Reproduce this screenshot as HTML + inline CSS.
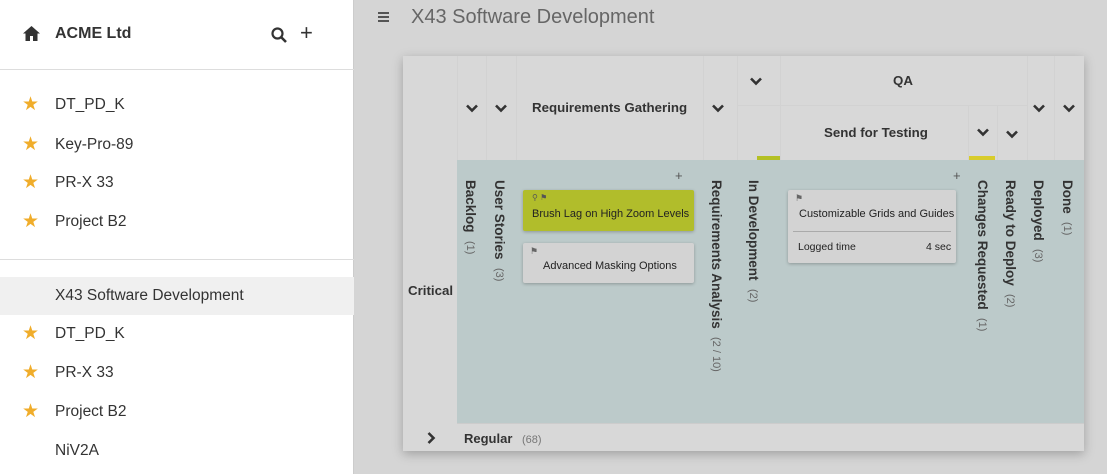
<!DOCTYPE html>
<html><head><style>
*{margin:0;padding:0;box-sizing:border-box}
body{width:1107px;height:474px;overflow:hidden;font-family:"Liberation Sans",sans-serif;background:#d5d5d5;position:relative;color:#333}
.a{position:absolute}
#side{left:0;top:0;width:354px;height:474px;background:#fff;border-right:1px solid #ccc}
.it{position:absolute;left:0;width:354px;height:38px;font-size:15.5px;color:#333;line-height:38px}
.it .t{position:absolute;left:55px}
.star{position:absolute;left:22px;top:0;color:#f0ad2b;font-size:19px}
.hd{font-weight:bold;font-size:13.3px;color:#333;white-space:nowrap}
.v{writing-mode:vertical-rl;font-weight:bold;font-size:13.5px;color:#333;white-space:nowrap}
.v span{font-weight:normal;font-size:11px;color:#666;margin-top:8px;display:inline-block}
.chev{position:absolute;width:12px;height:9px}
.card{position:absolute;border-radius:2px;box-shadow:0 1px 3px rgba(0,0,0,.25);font-size:11px;color:#222;white-space:nowrap}
</style></head><body>
<div class="a" id="side">
 <svg class="a" style="left:23px;top:26px" width="17" height="15" viewBox="0 0 17 15"><path d="M8.5 0L0 7.5h2.5V15h4.5v-5h3v5h4.5V7.5H17z" fill="#333"/></svg>
 <div class="a" style="left:55px;top:25px;font-weight:bold;font-size:16px;color:#333">ACME Ltd</div>
 <svg class="a" style="left:271px;top:27px" width="17" height="17" viewBox="0 0 17 17"><circle cx="6.5" cy="6.5" r="5" stroke="#333" stroke-width="2.2" fill="none"/><path d="M10 10l5 5" stroke="#333" stroke-width="2.6"/></svg>
 <div class="a" style="left:300px;top:20px;font-size:22px;color:#333">+</div>
 <div class="a" style="left:0;top:69px;width:354px;height:1px;background:#ddd"></div>
 <div class="it" style="top:86px"><span class="star">★</span><span class="t">DT_PD_K</span></div>
 <div class="it" style="top:126px"><span class="star">★</span><span class="t">Key-Pro-89</span></div>
 <div class="it" style="top:164px"><span class="star">★</span><span class="t">PR-X 33</span></div>
 <div class="it" style="top:203px"><span class="star">★</span><span class="t">Project B2</span></div>
 <div class="a" style="left:0;top:259px;width:354px;height:1px;background:#ddd"></div>
 <div class="it" style="top:277px;background:#f0f0f0"><span class="t">X43 Software Development</span></div>
 <div class="it" style="top:315px"><span class="star">★</span><span class="t">DT_PD_K</span></div>
 <div class="it" style="top:354px"><span class="star">★</span><span class="t">PR-X 33</span></div>
 <div class="it" style="top:393px"><span class="star">★</span><span class="t">Project B2</span></div>
 <div class="it" style="top:432px"><span class="t">NiV2A</span></div>
</div>
<div class="a" style="left:378px;top:12px;width:11px;height:2px;background:#555;box-shadow:0 4px 0 #555,0 8px 0 #555"></div>
<div class="a" style="left:411px;top:6px;font-size:20px;color:#666">X43 Software Development</div>

<div class="a" style="left:403px;top:56px;width:681px;height:395px;background:#d8d8d8;box-shadow:0 3px 10px rgba(0,0,0,.25)"></div>
<div class="a" style="left:457px;top:56px;width:1px;height:104px;background:#d2d2d2"></div>
<div class="a" style="left:486px;top:56px;width:1px;height:104px;background:#d2d2d2"></div>
<div class="a" style="left:516px;top:56px;width:1px;height:104px;background:#d2d2d2"></div>
<div class="a" style="left:703px;top:56px;width:1px;height:104px;background:#d2d2d2"></div>
<div class="a" style="left:737px;top:56px;width:1px;height:104px;background:#d2d2d2"></div>
<div class="a" style="left:780px;top:56px;width:1px;height:104px;background:#d2d2d2"></div>
<div class="a" style="left:1027px;top:56px;width:1px;height:104px;background:#d2d2d2"></div>
<div class="a" style="left:1054px;top:56px;width:1px;height:104px;background:#d2d2d2"></div>
<div class="a" style="left:737px;top:105px;width:290px;height:1px;background:#d2d2d2"></div>
<div class="a" style="left:968px;top:106px;width:1px;height:54px;background:#d2d2d2"></div>
<div class="a" style="left:997px;top:106px;width:1px;height:54px;background:#d2d2d2"></div>

<div class="a hd" style="left:532px;top:100px">Requirements Gathering</div>
<div class="a hd" style="left:893px;top:73px">QA</div>
<div class="a hd" style="left:824px;top:125px">Send for Testing</div>
<svg width="0" height="0" style="position:absolute"><defs><path id="cv" d="M1 1.5l5 5 5-5" stroke="#333" stroke-width="2.6" fill="none"/></defs></svg>
<svg class="chev" style="left:466px;top:104px"><use href="#cv"/></svg>
<svg class="chev" style="left:495px;top:104px"><use href="#cv"/></svg>
<svg class="chev" style="left:712px;top:104px"><use href="#cv"/></svg>
<svg class="chev" style="left:750px;top:77px"><use href="#cv"/></svg>
<svg class="chev" style="left:1033px;top:104px"><use href="#cv"/></svg>
<svg class="chev" style="left:1063px;top:104px"><use href="#cv"/></svg>
<svg class="chev" style="left:977px;top:128px"><use href="#cv"/></svg>
<svg class="chev" style="left:1006px;top:130px"><use href="#cv"/></svg>
<div class="a" style="left:757px;top:156px;width:23px;height:4px;background:#b4c024"></div>
<div class="a" style="left:969px;top:156px;width:26px;height:4px;background:#d8cc2c"></div>

<div class="a" style="left:457px;top:160px;width:627px;height:263px;background:#bccaca"></div>
<div class="a" style="left:457px;top:423px;width:627px;height:1px;background:#ccc"></div>
<div class="a hd" style="left:408px;top:283px">Critical</div>
<svg class="a" style="left:427px;top:432px" width="9" height="12"><path d="M1.5 1l5 5-5 5" stroke="#333" stroke-width="2.6" fill="none"/></svg>
<div class="a" style="left:464px;top:431px;font-weight:bold;font-size:13px;color:#333">Regular <span style="font-weight:normal;font-size:11px;color:#777;margin-left:6px">(68)</span></div>

<div class="a v" style="left:463px;top:180px">Backlog<span>(1)</span></div>
<div class="a v" style="left:492px;top:180px">User Stories<span>(3)</span></div>
<div class="a v" style="left:709px;top:180px">Requirements Analysis<span>(2 / 10)</span></div>
<div class="a v" style="left:746px;top:180px">In Development<span>(2)</span></div>
<div class="a v" style="left:975px;top:180px">Changes Requested<span>(1)</span></div>
<div class="a v" style="left:1003px;top:180px">Ready to Deploy<span>(2)</span></div>
<div class="a v" style="left:1031px;top:180px">Deployed<span>(3)</span></div>
<div class="a v" style="left:1060px;top:180px">Done<span>(1)</span></div>
<div class="a" style="left:675px;top:168px;font-size:13px;color:#555">+</div>
<div class="a" style="left:953px;top:168px;font-size:13px;color:#555">+</div>

<div class="card" style="left:523px;top:190px;width:171px;height:41px;background:#b1bd2b">
 <div class="a" style="left:9px;top:3px;font-size:8px;color:#555">&#9906; &#9873;</div>
 <div class="a" style="left:9px;top:18px">Brush Lag on High Zoom Levels</div>
</div>
<div class="card" style="left:523px;top:243px;width:171px;height:40px;background:#d3d3d3">
 <div class="a" style="left:7px;top:3px;font-size:9px;color:#666">&#9873;</div>
 <div class="a" style="left:20px;top:17px">Advanced Masking Options</div>
</div>
<div class="card" style="left:788px;top:190px;width:168px;height:73px;background:#d3d3d3">
 <div class="a" style="left:7px;top:3px;font-size:9px;color:#666">&#9873;</div>
 <div class="a" style="left:11px;top:18px">Customizable Grids and Guides</div>
 <div class="a" style="left:5px;top:41px;width:158px;height:1px;background:#aaa"></div>
 <div class="a" style="left:10px;top:51px;font-size:10.5px">Logged time</div>
 <div class="a" style="left:138px;top:51px;font-size:10.5px">4 sec</div>
</div>
</body></html>
